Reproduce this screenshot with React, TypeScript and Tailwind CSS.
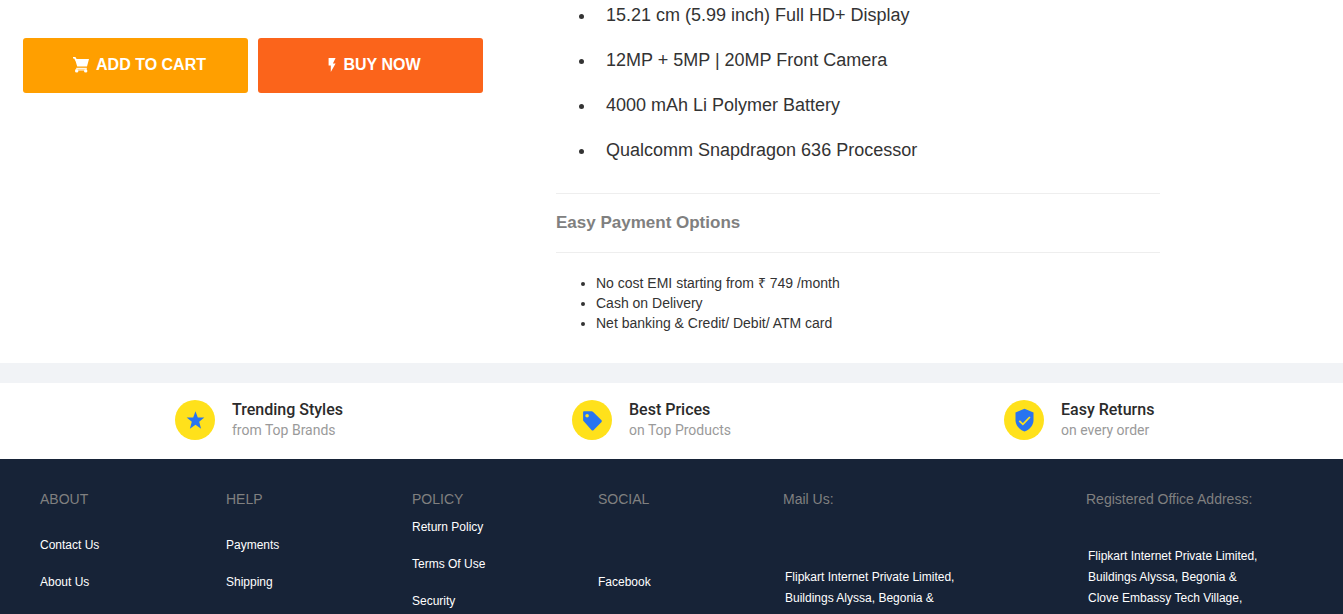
import type { ReactNode } from "react";

const highlights = [
  "15.21 cm (5.99 inch) Full HD+ Display",
  "12MP + 5MP | 20MP Front Camera",
  "4000 mAh Li Polymer Battery",
  "Qualcomm Snapdragon 636 Processor",
];

const paymentOptions = [
  "No cost EMI starting from ₹ 749 /month",
  "Cash on Delivery",
  "Net banking & Credit/ Debit/ ATM card",
];

function CartIcon() {
  return (
    <svg className="h-4 w-4" viewBox="0 0 16 16" fill="currentColor" aria-hidden="true">
      <path d="M0 0h2.400l1.200 1.900H16l-2 7.700H4.200L2.700 4.600 1.200 1.500H0z" />
      <path d="M3.200 10.800h10.600v1.100H3.200z" />
      <path d="M2.400 12.400h11.400v1.100H2.400z" />
      <circle cx="3.700" cy="13.900" r="1.700" />
      <circle cx="12.700" cy="13.900" r="1.700" />
    </svg>
  );
}

function BoltIcon() {
  return (
    <svg className="h-[14px] w-2" viewBox="0 0 8 14" fill="currentColor" aria-hidden="true">
      <path d="M.6 0v7.400h2.200V14L7.600 5.400H4.900L7.600 0z" />
    </svg>
  );
}

function StarIcon() {
  return (
    <svg className="h-10 w-10" viewBox="0 0 40 40" aria-hidden="true">
      <circle cx="20" cy="20" r="20" fill="#ffe11b" />
      <path d="M20.500 11.300l2.300 6.300h6.500l-5.100 4.200 1.900 6.900-5.600-3.900-5.600 3.900 1.900-6.900-5.100-4.200h6.500z" fill="#2874f0" />
    </svg>
  );
}

function TagIcon() {
  return (
    <svg className="h-10 w-10" viewBox="0 0 40 40" aria-hidden="true">
      <circle cx="20" cy="20" r="20" fill="#ffe11b" />
      <path
        fillRule="evenodd"
        d="M12 11.200h7.600c.5 0 .9.200 1.300.5l8.400 8.400c.7.700.7 1.500 0 2.200l-7.600 7.600c-.7.700-1.500.7-2.200 0l-7.800-8.600c-.4-.4-.6-.8-.6-1.300V12.100c0-.5.400-.9.900-.9zm3.100 2.800a1.800 1.800 0 1 0 0 3.600 1.800 1.800 0 0 0 0-3.600z"
        fill="#2874f0"
      />
    </svg>
  );
}

function ShieldIcon() {
  return (
    <svg className="h-10 w-10" viewBox="0 0 40 40" aria-hidden="true">
      <circle cx="20" cy="20" r="20" fill="#ffe11b" />
      <path d="M20.500 8.800l9 3.700v7.500c0 5.200-3.800 9.900-9 11.600-5.200-1.700-9-6.400-9-11.600v-7.500z" fill="#2874f0" />
      <path d="M15.300 20.800l3.600 3.500 7-7.300" fill="none" stroke="#ffe11b" strokeWidth="1.800" />
    </svg>
  );
}

function Benefit({ icon, title, note }: { icon: ReactNode; title: string; note: string }) {
  return (
    <div className="flex items-center gap-[17px] font-['Roboto',sans-serif]">
      {icon}
      <div>
        <p className="text-base leading-5 font-medium text-[#2b2b2b]">{title}</p>
        <p className="text-sm leading-5 text-[#9a9a9a]">{note}</p>
      </div>
    </div>
  );
}

function FooterColumn({ title, children }: { title: string; children: ReactNode }) {
  return (
    <section>
      <h2 className="text-sm leading-5 text-[#808080]">{title}</h2>
      {children}
    </section>
  );
}

function Links({ items }: { items: string[] }) {
  return (
    <ul className="flex flex-col gap-4 text-xs leading-[21px] text-white">
      {items.map((item) => (
        <li key={item}>
          <a href="#">{item}</a>
        </li>
      ))}
    </ul>
  );
}

export default function App() {
  return (
    <div className="flex min-h-screen flex-col bg-white font-['Liberation_Sans',Arial,sans-serif] text-sm leading-5 text-[#333333]">
      <main className="flex items-start pb-[30px]">
        <div className="flex w-[556px] shrink-0 gap-2.5 pt-[38px] pl-[23px] text-base font-bold text-white">
          <button type="button" className="flex h-[55px] w-[225px] items-center justify-center gap-[7px] rounded-[3px] bg-[#ff9f00] pb-0.5 pl-2">
            <CartIcon />
            ADD TO CART
          </button>
          <button type="button" className="flex h-[55px] w-[225px] items-center justify-center gap-[7px] rounded-[3px] bg-[#fb641b] pb-0.5 pl-2">
            <BoltIcon />
            BUY NOW
          </button>
        </div>
        <div className="w-[45%] pt-[3px]">
          <ul className="flex list-disc flex-col gap-5 pl-10 text-lg leading-[25px]">
            {highlights.map((item) => (
              <li key={item}>
                <span className="pl-2.5">{item}</span>
              </li>
            ))}
          </ul>
          <h2 className="mt-[30px] border-y border-[#eeeeee] py-[19px] text-[17px] leading-5 font-bold text-[#808080]">
            Easy Payment Options
          </h2>
          <ul className="mt-5 list-disc pl-10">
            {paymentOptions.map((item) => (
              <li key={item}>{item}</li>
            ))}
          </ul>
        </div>
      </main>

      <div className="h-5 bg-[#f1f3f6]" />

      <section className="grid h-[76px] grid-cols-[175fr_397fr_432fr_339fr] items-center pb-0.5">
        <span />
        <Benefit icon={<StarIcon />} title="Trending Styles" note="from Top Brands" />
        <Benefit icon={<TagIcon />} title="Best Prices" note="on Top Products" />
        <Benefit icon={<ShieldIcon />} title="Easy Returns" note="on every order" />
      </section>

      <footer className="grid grow grid-cols-[186fr_186fr_186fr_185fr_303fr_257fr] bg-[#172337] pt-[30px] pl-10">
        <FooterColumn title="ABOUT">
          <div className="pt-[26px]">
            <Links items={["Contact Us", "About Us"]} />
          </div>
        </FooterColumn>
        <FooterColumn title="HELP">
          <div className="pt-[26px]">
            <Links items={["Payments", "Shipping"]} />
          </div>
        </FooterColumn>
        <FooterColumn title="POLICY">
          <div className="pt-2">
            <Links items={["Return Policy", "Terms Of Use", "Security"]} />
          </div>
        </FooterColumn>
        <FooterColumn title="SOCIAL">
          <div className="pt-[63px]">
            <Links items={["Facebook"]} />
          </div>
        </FooterColumn>
        <FooterColumn title="Mail Us:">
          <address className="pt-[58px] pl-0.5 text-xs leading-[21px] text-white not-italic">
            Flipkart Internet Private Limited,
            <br />
            Buildings Alyssa, Begonia &amp;
          </address>
        </FooterColumn>
        <FooterColumn title="Registered Office Address:">
          <address className="pt-[37px] pl-0.5 text-xs leading-[21px] text-white not-italic">
            Flipkart Internet Private Limited,
            <br />
            Buildings Alyssa, Begonia &amp;
            <br />
            Clove Embassy Tech Village,
          </address>
        </FooterColumn>
      </footer>
    </div>
  );
}
